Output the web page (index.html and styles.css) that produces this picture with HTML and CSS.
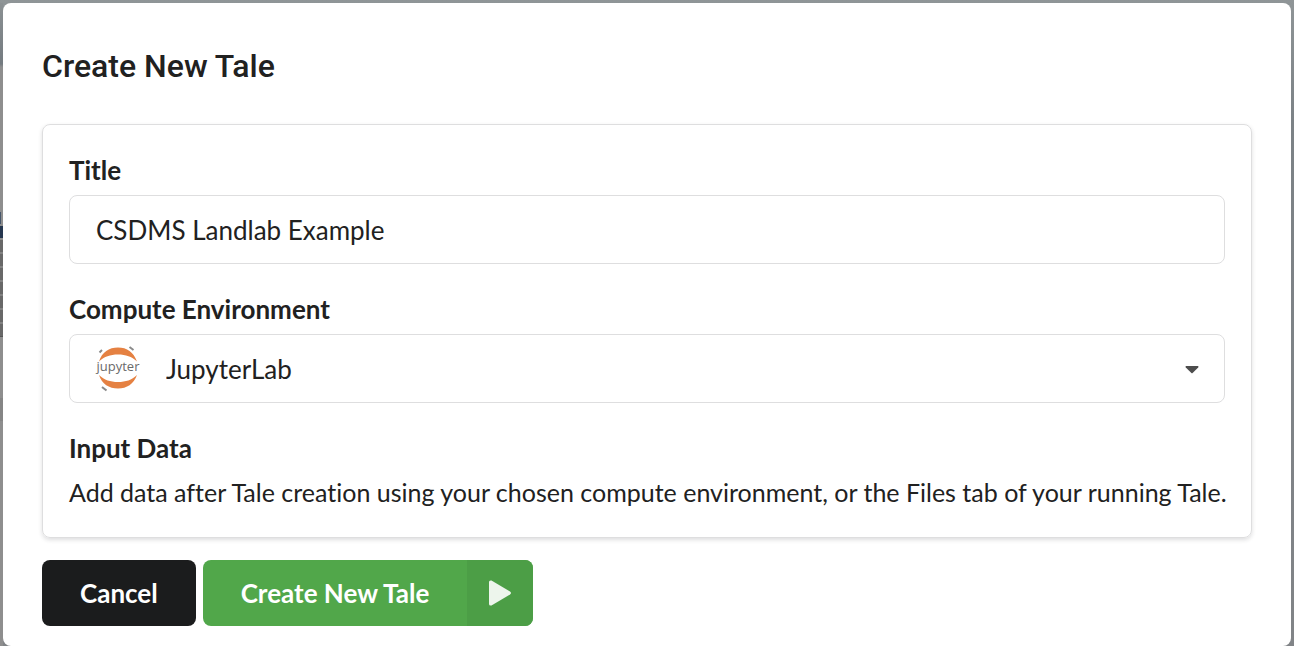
FILE: index.html
```html
<!DOCTYPE html>
<html lang="en">
<head>
<meta charset="utf-8">
<title>Create New Tale</title>
<link rel="stylesheet" href="styles.css">
</head>
<body>
<main class="modal" role="dialog" aria-labelledby="modal-title">
  <h1 class="modal-title" id="modal-title">Create New Tale</h1>
  <form class="modal-form">
    <div class="segment">
      <div class="field">
        <label class="label" for="title">Title</label>
        <input class="control" id="title" type="text" value="CSDMS Landlab Example">
      </div>
      <div class="field">
        <label class="label" for="environment">Compute Environment</label>
        <div class="dropdown">
          <select class="control dropdown-select" id="environment">
            <option>JupyterLab</option>
          </select>
          <svg class="dropdown-logo" viewBox="0 0 46 46" aria-hidden="true">
            <path class="logo-arc" d="M4 15.500C7 6 14 1.500 23 1.500S38.500 6 42 15.500C36.500 10.500 31 8.500 23 8.500S9.500 10.500 4 15.500Z"/>
            <path class="logo-arc" d="M4 29C9.500 34 15 36 23 36S36.500 34 42 29C38.500 38 32 42.500 23 42.500S7 38 4 29Z"/>
            <path class="logo-moon" d="M4.500 6.500L7 4M34.500 1L38.500 4M7 41L11.500 44.500"/>
            <text class="logo-word" x="23" y="25" text-anchor="middle">jupyter</text>
          </svg>
          <svg class="dropdown-caret" viewBox="0 0 14 8" aria-hidden="true"><path d="M1 0H13Q14 .5 13.200 1.500L7.600 7Q7 7.500 6.400 7L.8 1.500Q0 .5 1 0Z"/></svg>
        </div>
      </div>
      <section class="field">
        <h2 class="label">Input Data</h2>
        <p class="hint">Add data after Tale creation using your chosen compute environment, or the Files tab of your running Tale.</p>
      </section>
    </div>
    <div class="actions">
      <button class="button button-cancel" type="button">Cancel</button>
      <button class="button button-create" type="button">
        <span class="button-text">Create New Tale</span>
        <span class="button-icon"><svg class="play" viewBox="0 0 24 26" aria-hidden="true"><path d="M1 2Q1 0 3.500 .5L22 11.500Q24 13 22 14.500L3.500 25.500Q1 26 1 24Z"/></svg></span>
      </button>
    </div>
  </form>
</main>
</body>
</html>
```
FILE: styles.css
```css
* {
  box-sizing: border-box;
}

body {
  margin: 0;
  padding: 3px 3px 0;
  min-height: 100vh;
  font-family: Lato, sans-serif;
  font-size: 26px;
  font-variant-ligatures: none;
  line-height: 36px;
  color: #212121;
  background:
    linear-gradient(#47566a, #47566a) 0 212px / 1px 12px no-repeat,
    linear-gradient(#26374f, #26374f) 0 226px / 3px 12px no-repeat,
    repeating-linear-gradient(#686868 0 12px, #828282 12px 14px) 0 240px / 3px 96px no-repeat,
    linear-gradient(#555, #555) 0 336px / 3px 1px no-repeat,
    linear-gradient(#858585, #858585) 0 398px / 3px 23px no-repeat,
    linear-gradient(#8b9193, #747b80 61px, #8e8e8e 64px) 0 3px / 3px 100% no-repeat,
    linear-gradient(#8f9597, #7c8286 120px, #818487) no-repeat;
}

.modal {
  padding: 39px 39px 20px;
  background: #fff;
  border-radius: 8px;
}

.modal-title {
  margin: 0 0 34px;
  font-family: Roboto, sans-serif;
  font-size: 32px;
  font-weight: 500;
  line-height: 48px;
}

.segment {
  display: flex;
  flex-direction: column;
  gap: 27px;
  padding: 27px 26px 25px;
  border: 1px solid #dededf;
  border-radius: 8px;
  box-shadow: 0 2px 4px rgba(34, 36, 38, 0.15);
}

.label {
  display: block;
  margin: 0 0 7px;
  font-size: 26px;
  font-weight: 700;
  line-height: 36px;
}

.control {
  display: block;
  width: 100%;
  height: 69px;
  padding: 0 26px;
  border: 1px solid #dededf;
  border-radius: 8px;
  background: #fff;
  color: #212121;
  font: inherit;
  outline: none;
  appearance: none;
}

.dropdown {
  position: relative;
}

.dropdown-select {
  padding-left: 96px;
}

.dropdown-logo {
  position: absolute;
  top: 12px;
  left: 26px;
  width: 46px;
  height: 46px;
  pointer-events: none;
}

.logo-arc {
  fill: #e58142;
}

.logo-moon {
  fill: none;
  stroke: #8a8a8a;
  stroke-width: 2;
}

.logo-word {
  fill: #6a6a6a;
  font-family: "Open Sans", sans-serif;
  font-size: 13px;
  font-weight: 500;
}

.dropdown-caret {
  position: absolute;
  top: 32px;
  right: 26px;
  width: 14px;
  height: 8px;
  fill: #4d4d4d;
  pointer-events: none;
}

.hint {
  margin: 0;
  font-size: 25px;
  line-height: 39px;
}

@media (min-width: 1280px) {
  .hint {
    white-space: nowrap;
  }
}

.actions {
  display: flex;
  gap: 7px;
  margin-top: 22px;
}

.button {
  display: flex;
  align-items: center;
  height: 66px;
  padding: 0 38px;
  border: 0;
  border-radius: 8px;
  color: #fff;
  font: inherit;
  font-weight: 700;
  cursor: pointer;
}

.button-cancel {
  background: #1b1c1d;
}

.button-create {
  gap: 38px;
  padding-right: 0;
  overflow: hidden;
  background: #51a74a;
}

.button-icon {
  display: flex;
  align-items: center;
  justify-content: center;
  width: 66px;
  height: 100%;
  background: #4c9e46;
}

.play {
  width: 24px;
  height: 26px;
  fill: #edf5ec;
}
```
